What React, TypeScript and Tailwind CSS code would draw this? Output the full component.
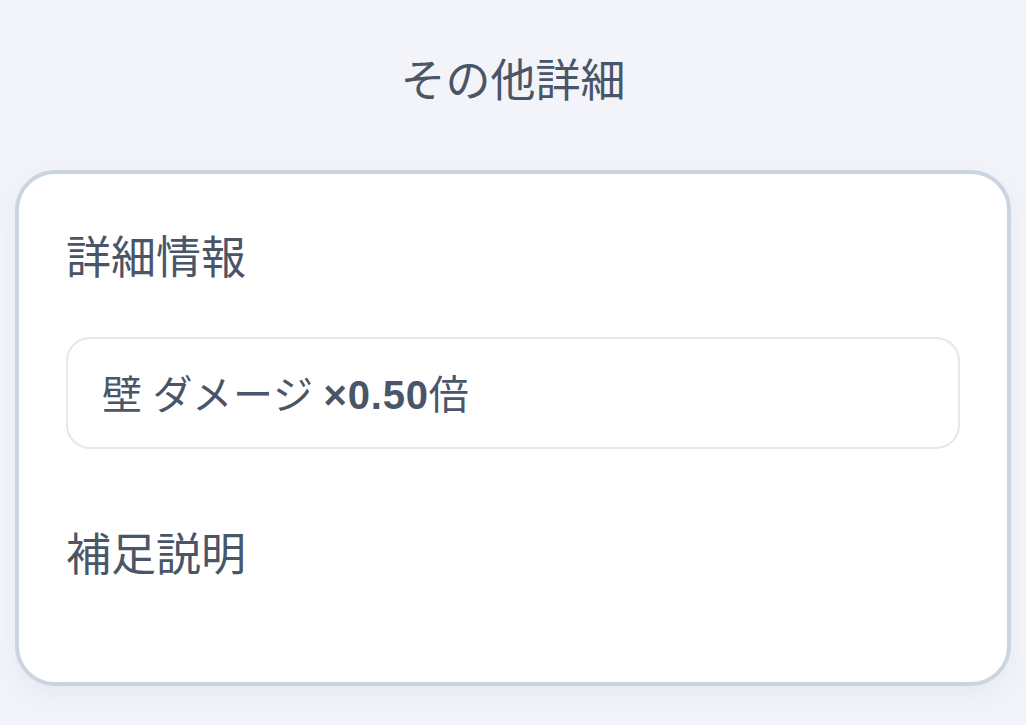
import React from "react";

const font = { fontFamily: '"Noto Sans CJK JP", "Noto Sans", sans-serif' };

export default function App() {
  return (
    <div
      className="min-h-[725px] w-full bg-[#f3f4f9] px-[15px] pt-[44px] pb-[40px] text-[#4a5568]"
      style={font}
    >
      <h1 className="text-center text-[45px] leading-[67px] font-normal">その他詳細</h1>
      <div className="mt-[59px] rounded-[40px] border-4 border-[#cbd5e1] bg-white px-[47px] pt-[47px] pb-[97px] shadow-[0_10px_25px_rgba(100,116,139,0.08)]">
        <h2 className="text-[45px] leading-[67px] font-normal">詳細情報</h2>
        <div className="mt-[49px] flex h-[112px] items-center rounded-[24px] border-2 border-[#e2e8f0] px-[34px]">
          <span className="text-[40px] leading-none tracking-[0.02em]">
            壁 ダメージ <span className="font-bold" style={{ fontFamily: '"Liberation Sans", Arial, sans-serif' }}>×0.50</span>倍
          </span>
        </div>
        <h2 className="mt-[69px] text-[45px] leading-[67px] font-normal">補足説明</h2>
      </div>
    </div>
  );
}
